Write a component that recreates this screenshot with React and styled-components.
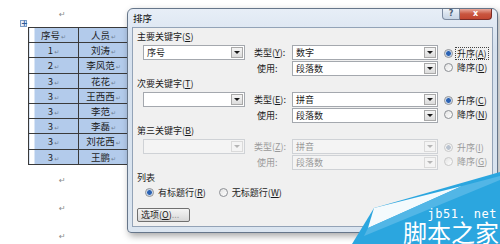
import React from "react";
import styled, { createGlobalStyle } from "styled-components";

const GlobalStyle = createGlobalStyle`
  html, body {
    margin: 0;
    padding: 0;
    background: #fff;
  }
  body {
    font-family: "Noto Sans CJK SC", "Noto Sans", sans-serif;
    overflow: hidden;
  }
`;

const cjk = `"Noto Sans CJK SC", "Noto Sans", sans-serif`;

const Page = styled.div`
  position: relative;
  width: 500px;
  height: 244px;
  overflow: hidden;
  background: #fff;
`;

/* ---------- document behind the dialog ---------- */

const Doc = styled.div`
  display: flex;
  flex-direction: column;
  padding-top: 6px;
`;

const ParaMark = styled.div`
  height: ${(p) => p.$h}px;
  line-height: ${(p) => p.$h}px;
  padding-left: 59px;
  font-size: 8px;
  color: #8a8a8a;
  font-family: "DejaVu Sans", sans-serif;
`;

const TableWrap = styled.div`
  position: relative;
  margin: 3px 0 2px 28px;
  width: 110px;
`;

const MoveHandle = styled.div`
  position: absolute;
  left: -8px;
  top: -7px;
  width: 7px;
  height: 7px;
  box-sizing: border-box;
  border: 1px solid #7a9cc6;
  background: #e8f0fa;
  color: #2b5c9a;
  font: bold 8px/5px "DejaVu Sans", sans-serif;
  text-align: center;
`;

const Table = styled.table`
  border-collapse: collapse;
  font-family: ${cjk};
  font-size: 9.5px;
  color: #1e1e1e;
`;

const Row = styled.tr`
  height: 15.2px;
`;

const Cell = styled.td`
  width: 50px;
  height: 15.2px;
  padding: 0;
  box-sizing: border-box;
  border: 1px solid #3a3a3a;
  text-align: center;
  line-height: 12px;
  vertical-align: middle;
  background: ${(p) =>
    p.$lead
      ? "linear-gradient(to right, #fff 5px, #b3cbeb 5px)"
      : "#b3cbeb"};
`;

const CellMark = styled.span`
  font-size: 6px;
  line-height: 0;
  color: #6f7f95;
  font-family: "DejaVu Sans", sans-serif;
  margin-left: 1px;
`;

/* ---------- sort dialog ---------- */

const Dialog = styled.div`
  position: absolute;
  left: 127px;
  top: 8px;
  width: 371px;
  height: 225px;
  box-sizing: border-box;
  display: flex;
  flex-direction: column;
  padding: 0 4px 5px;
  border: 1px solid #66768a;
  border-radius: 6px 6px 4px 4px;
  background: linear-gradient(#e7eef7, #d6e1ee 40px, #dbe5f0);
  box-shadow: 2px 3px 7px rgba(0, 0, 0, 0.35);
  font-family: ${cjk};
  font-size: 9px;
  color: #1b1b1b;
`;

const TitleBar = styled.div`
  height: 18px;
  display: flex;
  align-items: flex-start;
  justify-content: space-between;
`;

const Title = styled.div`
  line-height: 18px;
  padding-left: 1px;
  font-size: 9.5px;
  color: #111;
`;

const Caption = styled.div`
  display: flex;
  margin-right: 1px;
`;

const CaptionBtn = styled.div`
  height: 11px;
  width: ${(p) => (p.$close ? 32 : 18)}px;
  box-sizing: border-box;
  border: 1px solid ${(p) => (p.$close ? "#7a2b26" : "#7d8ba0")};
  border-top: none;
  border-left: ${(p) => (p.$close ? "none" : "1px solid #7d8ba0")};
  border-radius: ${(p) => (p.$close ? "0 0 4px 0" : "0 0 0 4px")};
  background: ${(p) =>
    p.$close
      ? "linear-gradient(#e9a99c, #c9553f 50%, #c24631)"
      : "linear-gradient(#eef3f9, #d7e1ed 50%, #c8d5e5)"};
  color: ${(p) => (p.$close ? "#fff" : "#4a5a70")};
  font: bold 8px/10px "DejaVu Sans", sans-serif;
  text-align: center;
`;

const Client = styled.div`
  flex: 1;
  display: flex;
  flex-direction: column;
  border: 1px solid #93a3b7;
  background: #f0f0f0;
  padding: 2px 0 0 4px;
`;

const Section = styled.div`
  display: flex;
  flex-direction: column;
  gap: 1px;
  margin-bottom: 1px;
`;

const GroupLabel = styled.div`
  height: 14px;
  line-height: 14px;
  color: #1b1b1b;
`;

const Rows = styled.div`
  display: grid;
  grid-template-columns: 102px 47px 146px auto;
  grid-template-rows: 15px 15px;
  row-gap: 1px;
  margin-left: 6px;
`;

const FieldLabel = styled.div`
  grid-column: 2;
  line-height: 15px;
  padding-left: ${(p) => (p.$indent ? 12 : 9)}px;
  white-space: nowrap;
  color: ${(p) => (p.$disabled ? "#9a9a9a" : "#1b1b1b")};
`;

const Combo = styled.div`
  grid-column: ${(p) => p.$col};
  grid-row: ${(p) => p.$row};
  display: flex;
  box-sizing: border-box;
  height: 15px;
  border: 1px solid ${(p) => (p.$disabled ? "#cfd2d6" : "#a4a8ae")};
  background: ${(p) => (p.$disabled ? "#f4f4f4" : "#fff")};
  color: ${(p) => (p.$disabled ? "#9a9a9a" : "#1b1b1b")};
`;

const ComboText = styled.div`
  flex: 1;
  padding-left: 3px;
  line-height: 13px;
  overflow: hidden;
  white-space: nowrap;
`;

const ArrowBtn = styled.div`
  width: 12px;
  margin: 1px;
  box-sizing: border-box;
  border: 1px solid ${(p) => (p.$disabled ? "#dadada" : "#a9a9a9")};
  background: ${(p) =>
    p.$disabled ? "#f4f4f4" : "linear-gradient(#f5f5f5, #dcdcdc)"};
  display: flex;
  align-items: center;
  justify-content: center;
`;

const Arrow = styled.div`
  width: 0;
  height: 0;
  border-left: 3px solid transparent;
  border-right: 3px solid transparent;
  border-top: 3px solid ${(p) => (p.$disabled ? "#b5b5b5" : "#1a1a1a")};
`;

const RadioCol = styled.div`
  grid-column: 4;
  grid-row: 1 / span 2;
  display: flex;
  flex-direction: column;
  justify-content: center;
  gap: 3px;
  margin-left: 6px;
`;

const RadioRow = styled.div`
  display: flex;
  align-items: center;
  gap: 3px;
  white-space: nowrap;
  color: ${(p) => (p.$disabled ? "#9a9a9a" : "#1b1b1b")};
`;

const RadioDot = styled.span`
  width: 9px;
  height: 9px;
  box-sizing: border-box;
  border-radius: 50%;
  border: 1px solid ${(p) => (p.$disabled ? "#c9c9c9" : "#8c8f94")};
  background: ${(p) =>
    p.$on
      ? p.$disabled
        ? "radial-gradient(circle, #b8c2cf 0 2px, #f2f2f2 2.5px)"
        : "radial-gradient(circle, #2b62b3 0 2px, #9fb9dd 2.5px, #f1f4f8 3.5px)"
      : "linear-gradient(135deg, #e2e2e2, #fff)"};
`;

const RadioText = styled.span`
  line-height: 11px;
  padding: 0 1px;
  outline: ${(p) => (p.$focus ? "1px dotted #444" : "none")};
`;

const Hotkey = styled.u`
  text-underline-offset: 1px;
`;

const ListRow = styled.div`
  display: flex;
  gap: 12px;
  margin: 1px 0 0 8px;
  height: 13px;
`;

const OptionsBtn = styled.div`
  width: 53px;
  height: 14px;
  box-sizing: border-box;
  margin-top: 9px;
  border: 1px solid #707070;
  border-radius: 2px;
  background: linear-gradient(#f4f4f4, #e6e6e6 50%, #d7d7d7);
  line-height: 12px;
  padding-left: 3px;
  white-space: nowrap;
`;

const Dim = styled.span`
  color: #a0a0a0;
`;

/* ---------- watermark ---------- */

const Watermark = styled.div`
  position: absolute;
  right: 0;
  bottom: 0;
  width: 150px;
  height: 74px;
  display: flex;
  flex-direction: column;
  align-items: flex-end;
  justify-content: flex-end;
`;

const WaterShape = styled.svg`
  position: absolute;
  inset: 0;
`;

const Site = styled.div`
  position: relative;
  font: 12px/12px "DejaVu Sans Mono", "Liberation Mono", monospace;
  color: #fff;
  letter-spacing: 0.5px;
  margin: 0 3px 1px 0;
`;

const Brand = styled.div`
  position: relative;
  font-family: ${cjk};
  font-size: 24px;
  line-height: 22px;
  height: 22px;
  color: #fff;
  margin: 0 1px 1px 0;
`;

const docRows = [
  ["序号", "人员"],
  ["1", "刘涛"],
  ["2", "李风范"],
  ["3", "花花"],
  ["3", "王西西"],
  ["3", "李范"],
  ["3", "李磊"],
  ["3", "刘花西"],
  ["3", "王鹏"],
];

const sections = [
  { title: "主要关键字", key: "S", value: "序号", typeKey: "Y", type: "数字", use: "段落数", asc: "A", desc: "D", focus: true },
  { title: "次要关键字", key: "T", value: "", typeKey: "E", type: "拼音", use: "段落数", asc: "C", desc: "N" },
  { title: "第三关键字", key: "B", value: "", typeKey: "Z", type: "拼音", use: "段落数", asc: "I", desc: "G", disabled: true },
];

function ComboBox({ col, row, value, disabled }) {
  return (
    <Combo $col={col} $row={row} $disabled={disabled}>
      <ComboText>{value}</ComboText>
      <ArrowBtn $disabled={disabled}>
        <Arrow $disabled={disabled} />
      </ArrowBtn>
    </Combo>
  );
}

function Radio({ label, hotkey, on, disabled, focus }) {
  return (
    <RadioRow $disabled={disabled}>
      <RadioDot $on={on} $disabled={disabled} />
      <RadioText $focus={focus}>
        {label}(<Hotkey>{hotkey}</Hotkey>)
      </RadioText>
    </RadioRow>
  );
}

function SortSection({ s }) {
  return (
    <Section>
      <GroupLabel>
        {s.title}(<Hotkey>{s.key}</Hotkey>)
      </GroupLabel>
      <Rows>
        <ComboBox col={1} row={1} value={s.value} disabled={s.disabled} />
        <FieldLabel $disabled={s.disabled}>
          类型(<Hotkey>{s.typeKey}</Hotkey>):
        </FieldLabel>
        <ComboBox col={3} row={1} value={s.type} disabled={s.disabled} />
        <FieldLabel $disabled={s.disabled} $indent>
          使用:
        </FieldLabel>
        <ComboBox col={3} row={2} value={s.use} disabled={s.disabled} />
        <RadioCol>
          <Radio label="升序" hotkey={s.asc} on disabled={s.disabled} focus={s.focus} />
          <Radio label="降序" hotkey={s.desc} disabled={s.disabled} />
        </RadioCol>
      </Rows>
    </Section>
  );
}

export default function App() {
  return (
    <Page>
      <GlobalStyle />
      <Doc>
        <ParaMark $h={18}>↵</ParaMark>
        <TableWrap>
          <MoveHandle>+</MoveHandle>
          <Table>
            <tbody>
              {docRows.map(([no, name], i) => (
                <Row key={i}>
                  <Cell $lead>
                    {no}
                    <CellMark>↵</CellMark>
                  </Cell>
                  <Cell>
                    {name}
                    <CellMark>↵</CellMark>
                  </Cell>
                </Row>
              ))}
            </tbody>
          </Table>
        </TableWrap>
        <ParaMark $h={28}>↵</ParaMark>
        <ParaMark $h={28}>↵</ParaMark>
        <ParaMark $h={28}>↵</ParaMark>
      </Doc>

      <Dialog>
        <TitleBar>
          <Title>排序</Title>
          <Caption>
            <CaptionBtn>?</CaptionBtn>
            <CaptionBtn $close>x</CaptionBtn>
          </Caption>
        </TitleBar>
        <Client>
          {sections.map((s) => (
            <SortSection key={s.title} s={s} />
          ))}
          <GroupLabel>列表</GroupLabel>
          <ListRow>
            <Radio label="有标题行" hotkey="R" on />
            <Radio label="无标题行" hotkey="W" />
          </ListRow>
          <OptionsBtn>
            选项(<Hotkey>O</Hotkey>)<Dim>...</Dim>
          </OptionsBtn>
        </Client>
      </Dialog>

      <Watermark>
        <WaterShape viewBox="0 0 150 74" width="150" height="74">
          <polygon points="2,74 24,38 150,2 150,74" fill="#2ba6df" />
          <polygon points="24,38 112,16 18,58" fill="#f4fafd" />
          <polygon points="18,58 112,16 150,6 150,10 14,66" fill="#52b6e6" />
        </WaterShape>
        <Site>jb51. net</Site>
        <Brand>脚本之家</Brand>
      </Watermark>
    </Page>
  );
}
